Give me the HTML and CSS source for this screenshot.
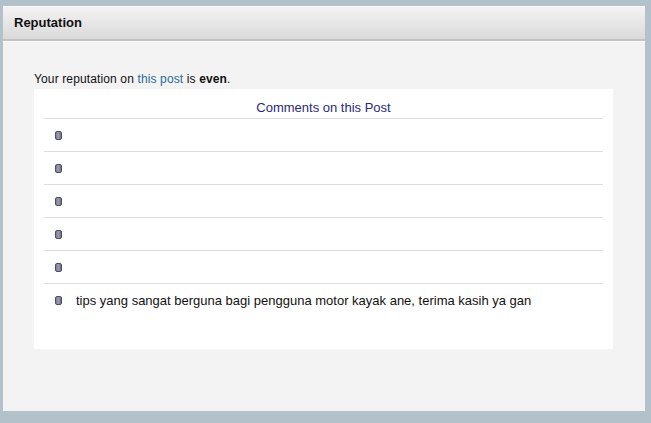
FILE: index.html
```html
<!DOCTYPE html>
<html>
<head>
<meta charset="utf-8">
<link rel="stylesheet" href="styles.css">
</head>
<body>
<div class="panel">
  <div class="panel-head">Reputation</div>
  <div class="panel-body">
    <p class="summary">Your reputation on <a href="#">this post</a> is <b>even</b>.</p>
    <div class="comments">
      <div class="comments-title">Comments on this Post</div>
      <ul class="list">
        <li><span class="dot"></span></li>
        <li><span class="dot"></span></li>
        <li><span class="dot"></span></li>
        <li><span class="dot"></span></li>
        <li><span class="dot"></span></li>
        <li class="last"><span class="dot"></span><span class="txt">tips yang sangat berguna bagi pengguna motor kayak ane, terima kasih ya gan</span></li>
      </ul>
    </div>
  </div>
</div>
</body>
</html>
```
FILE: styles.css
```css
html, body {
  margin: 0;
  padding: 0;
  background: #b3c1ca;
  font-family: "Liberation Sans", Arial, sans-serif;
}
.panel {
  margin: 6px 0 0 3px;
  width: 642px;
  height: 405px;
  background: #f3f3f3;
  border-top: 1px solid #fbfbfb;
  box-sizing: border-box;
  display: flex;
  flex-direction: column;
}
.panel-head {
  height: 34px;
  box-sizing: border-box;
  padding: 8px 0 0 11px;
  font-size: 13px;
  font-weight: bold;
  color: #111;
  background: linear-gradient(#f4f2f2, #e4e4e4 60%, #dadada);
  border-bottom: 2px solid #c2c2c2;
}
.panel-body {
  flex: 1;
  padding: 0 31px;
  border-top: 1px solid #fafafa;
}
.summary {
  margin: 0;
  padding-top: 30px;
  height: 17px;
  font-size: 12px;
  line-height: 14px;
  letter-spacing: 0.13px;
  color: #111;
}
.summary a {
  color: #2a6c9a;
  text-decoration: none;
}
.comments {
  background: #fff;
  width: 579px;
  height: 260px;
  padding: 0 10px;
  box-sizing: border-box;
}
.comments-title {
  height: 30px;
  box-sizing: border-box;
  padding-top: 11px;
  text-align: center;
  font-size: 13px;
  line-height: 15px;
  color: #2a2a78;
  border-bottom: 1px solid #dcdcdc;
}
.list {
  list-style: none;
  margin: 0;
  padding: 0;
}
.list li {
  height: 33px;
  box-sizing: border-box;
  border-bottom: 1px solid #dcdcdc;
  display: flex;
  align-items: center;
  padding-left: 11px;
  font-size: 13px;
  color: #111;
}
.list li.last {
  border-bottom: none;
}
.dot {
  width: 7px;
  height: 9px;
  box-sizing: border-box;
  border-radius: 2px;
  border: 1px solid #4d4d5e;
  background: linear-gradient(90deg, #7d7d96, #9a9ab2 50%, #6d6d86);
  margin-right: 14px;
}
.txt {
  line-height: 15px;
}
```
